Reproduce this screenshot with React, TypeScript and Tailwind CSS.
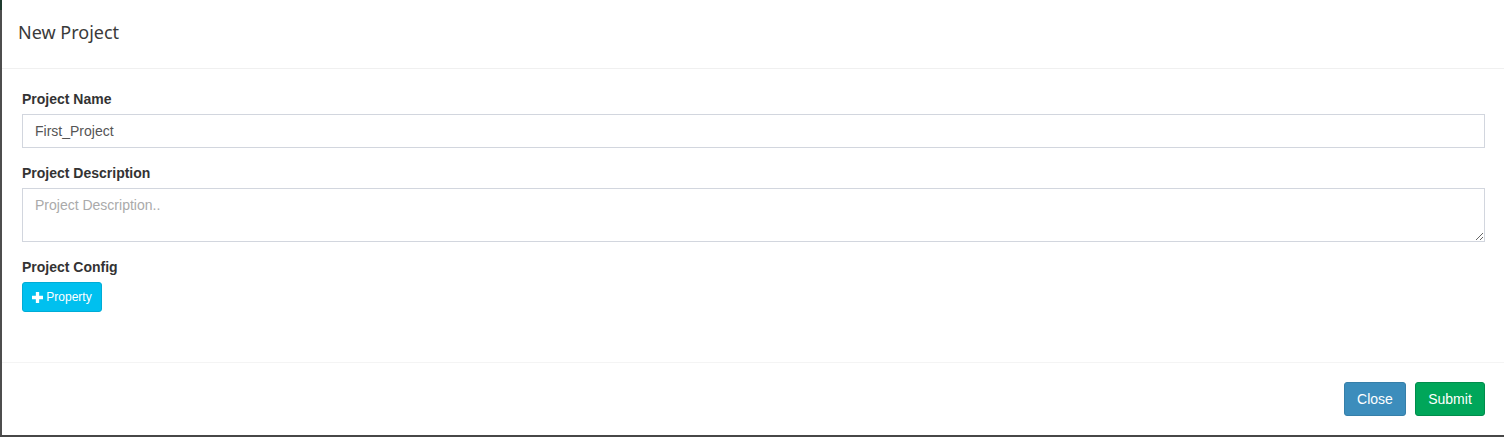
import React from "react";

export default function App() {
  return (
    <div className="w-[1504px] h-[437px] flex flex-col bg-white overflow-hidden" style={{ fontFamily: '"Liberation Sans", Arial, sans-serif' }}>
      <div className="flex flex-1 min-h-0">
        <div className="w-[2px] flex flex-col bg-[#4d4d4d]">
          <div className="h-[10px] bg-[#1f3b2f]" />
        </div>
        <div className="flex-1 flex flex-col bg-white">
          {/* header */}
          <div className="h-[69px] border-b border-[#f0f0f0] flex items-center pl-[16px] pb-[4px]">
            <h4 className="text-[18px] text-[#3a3a3a] font-normal leading-none" style={{ fontFamily: '"Noto Sans", "Open Sans", sans-serif' }}>
              New Project
            </h4>
          </div>
          {/* body */}
          <div className="pl-[20px] pr-[19px] pt-[20px] pb-[50px] border-b border-[#f4f4f4]">
            <div className="mb-[15px]">
              <label className="block text-[14px] leading-[20px] font-bold text-[#333] mb-[5px]">Project Name</label>
              <input
                readOnly
                value="First_Project"
                className="block w-full h-[34px] border border-[#d2d6de] px-[12px] text-[14px] text-[#555] outline-none"
                style={{ fontFamily: '"Liberation Sans", Arial, sans-serif' }}
              />
            </div>
            <div className="mb-[15px]">
              <label className="block text-[14px] leading-[20px] font-bold text-[#333] mb-[5px]">Project Description</label>
              <textarea
                placeholder="Project Description.."
                className="block w-full h-[54px] border border-[#d2d6de] px-[12px] py-[6px] text-[14px] leading-[20px] text-[#555] placeholder:text-[#aaa] outline-none resize-y"
                style={{ fontFamily: '"Liberation Sans", Arial, sans-serif' }}
              />
            </div>
            <div>
              <label className="block text-[14px] leading-[20px] font-bold text-[#333] mb-[5px]">Project Config</label>
              <button className="h-[30px] w-[80px] flex items-center justify-center gap-[3px] bg-[#00c0ef] border border-[#00acd6] rounded-[3px] text-white text-[12px]">
                <svg width="11" height="11" viewBox="0 0 10 10" className="mt-[1px]">
                  <path d="M3.5 0h3v3.5H10v3H6.5V10h-3V6.5H0v-3h3.5z" fill="#fff" />
                </svg>
                <span>Property</span>
              </button>
            </div>
          </div>
          {/* footer */}
          <div className="flex-1 flex justify-end items-start pt-[19px] pr-[19px] gap-[9px]">
            <button className="h-[34px] w-[62px] bg-[#3c8dbc] border border-[#367fa9] rounded-[3px] text-white text-[14px]">Close</button>
            <button className="h-[34px] w-[70px] bg-[#00a65a] border border-[#008d4c] rounded-[3px] text-white text-[14px]">Submit</button>
          </div>
        </div>
      </div>
      <div className="h-[2px] bg-[#474747]" />
    </div>
  );
}
